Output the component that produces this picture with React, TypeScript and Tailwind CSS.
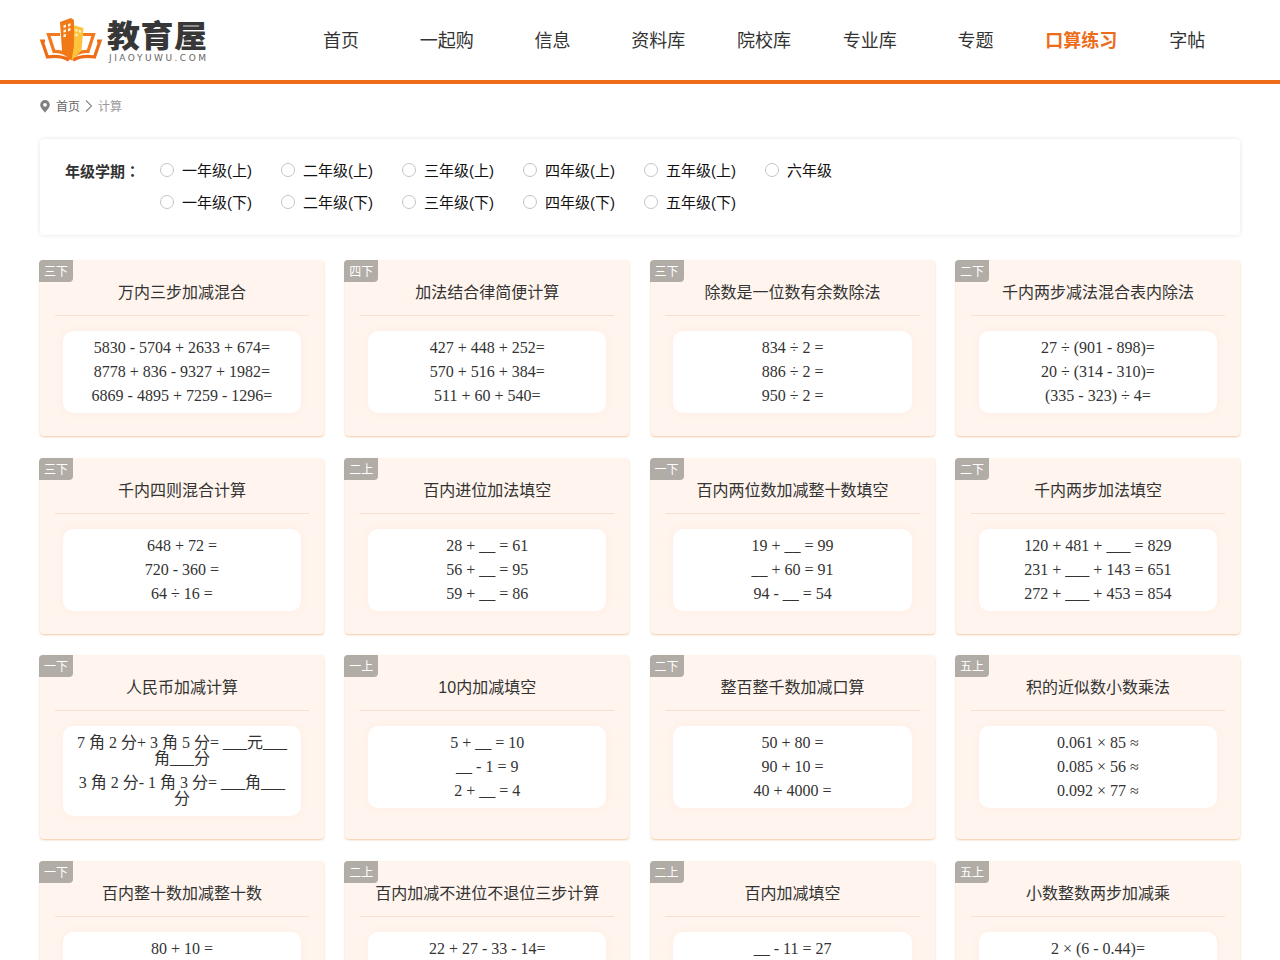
import clsx from 'clsx';
import { useState } from 'react';

interface Exercise {
    term: string;
    title: string;
    lines: string[];
}

const navItems = ['首页', '一起购', '信息', '资料库', '院校库', '专业库', '专题', '口算练习', '字帖'];

const grades = [
    ['一年级(上)', '二年级(上)', '三年级(上)', '四年级(上)', '五年级(上)', '六年级'],
    ['一年级(下)', '二年级(下)', '三年级(下)', '四年级(下)', '五年级(下)'],
];

const exercises: Exercise[] = [
    { term: '三下', title: '万内三步加减混合', lines: ['5830 - 5704 + 2633 + 674=', '8778 + 836 - 9327 + 1982=', '6869 - 4895 + 7259 - 1296='] },
    { term: '四下', title: '加法结合律简便计算', lines: ['427 + 448 + 252=', '570 + 516 + 384=', '511 + 60 + 540='] },
    { term: '三下', title: '除数是一位数有余数除法', lines: ['834 ÷ 2 =', '886 ÷ 2 =', '950 ÷ 2 ='] },
    { term: '二下', title: '千内两步减法混合表内除法', lines: ['27 ÷ (901 - 898)=', '20 ÷ (314 - 310)=', '(335 - 323) ÷ 4='] },
    { term: '三下', title: '千内四则混合计算', lines: ['648 + 72 =', '720 - 360 =', '64 ÷ 16 ='] },
    { term: '二上', title: '百内进位加法填空', lines: ['28 + __ = 61', '56 + __ = 95', '59 + __ = 86'] },
    { term: '一下', title: '百内两位数加减整十数填空', lines: ['19 + __ = 99', '__ + 60 = 91', '94 - __ = 54'] },
    { term: '二下', title: '千内两步加法填空', lines: ['120 + 481 + ___ = 829', '231 + ___ + 143 = 651', '272 + ___ + 453 = 854'] },
    { term: '一下', title: '人民币加减计算', lines: ['7 角 2 分+ 3 角 5 分= ___元___角___分', '3 角 2 分- 1 角 3 分= ___角___分'] },
    { term: '一上', title: '10内加减填空', lines: ['5 + __ = 10', '__ - 1 = 9', '2 + __ = 4'] },
    { term: '二下', title: '整百整千数加减口算', lines: ['50 + 80 =', '90 + 10 =', '40 + 4000 ='] },
    { term: '五上', title: '积的近似数小数乘法', lines: ['0.061 × 85 ≈', '0.085 × 56 ≈', '0.092 × 77 ≈'] },
    { term: '一下', title: '百内整十数加减整十数', lines: ['80 + 10 =', '60 - 20 =', '30 + 50 ='] },
    { term: '二上', title: '百内加减不进位不退位三步计算', lines: ['22 + 27 - 33 - 14=', '56 - 12 + 31 - 44=', '68 - 25 - 11 + 36='] },
    { term: '二上', title: '百内加减填空', lines: ['__ - 11 = 27', '35 + __ = 72', '__ + 18 = 64'] },
    { term: '五上', title: '小数整数两步加减乘', lines: ['2 × (6 - 0.44)=', '3 × (5 - 0.28)=', '4 × (1 + 0.75)='] },
];

const Logo = () => (
    <svg width="168" height="48" viewBox="0 0 168 48" className="shrink-0 overflow-visible">
        <g fill="none" strokeWidth="3.2">
            <path d="M20 18.500H8.500L14 35.500Q25 35 31 43" stroke="#f2791d" />
            <path d="M5 25H2L7.500 41Q20 39 29 44" stroke="#ee6c15" />
            <path d="M43 18.500H53.500L48 35.500Q37 35 31 43" stroke="#f2791d" />
            <path d="M57 25H60L54.500 41Q42 39 33 44" stroke="#ee6c15" />
        </g>
        <path d="M20 6 31 2 34 4V44L31.500 44.500 22 35Z" fill="#f17a16" />
        <path d="M34 9.300 43.500 12 41.500 34.500 31.500 44.500 34 30Z" fill="#fdc33c" />
        <path
            d="M23.500 9.200 26 8.500V11.200L23.500 12ZM28 7.900 30.500 7.200V9.900L28 10.700ZM23.500 13.900 26 13.200V15.900L23.500 16.700ZM28 12.600 30.500 11.900V14.600L28 15.400ZM23.500 18.600 26 17.900V20.600L23.500 21.400Z"
            fill="#fff2dd"
        />
        <path d="M35.500 13 37.500 13.500V15.800L35.500 15.400ZM39 13.900 41 14.400V16.700L39 16.300ZM35.500 17.500 37.500 17.900V20.300L35.500 19.900Z" fill="#fff2dd" />
        <text
            x="67"
            y="33.5"
            textLength="100"
            fontSize="33"
            fontWeight="900"
            fill="#373737"
            fontFamily="'Noto Sans CJK SC', sans-serif"
            transform="scale(1 .93)"
        >
            教育屋
        </text>
        <text x="69" y="45" textLength="97" fontSize="9" fill="#666" fontFamily="'DejaVu Sans', sans-serif">
            JIAOYUWU.COM
        </text>
    </svg>
);

const Header = () => (
    <header className="h-[84px] border-b-4 border-[#ec6c18] bg-white">
        <div className="mx-auto flex h-full w-[1200px] items-center">
            <Logo />
            <nav className="ml-20 flex flex-1 pt-px">
                {navItems.map((item) => (
                    <a
                        key={item}
                        href="#"
                        className={clsx('flex-1 text-center text-lg whitespace-nowrap', item === '口算练习' ? 'font-bold text-[#ec6c18]' : 'text-[#333]')}
                    >
                        {item}
                    </a>
                ))}
            </nav>
        </div>
    </header>
);

const Breadcrumb = () => (
    <div className="flex h-[55px] items-start pt-[15px] text-xs leading-4 text-[#666]">
        <svg width="10" height="13" viewBox="0 0 10 13" className="mt-px mr-1.5">
            <path
                d="M5 0a4.8 4.8 0 0 0-4.8 4.8C.2 8 3.5 10.500 5 12.700 6.500 10.500 9.800 8 9.800 4.800A4.800 4.800 0 0 0 5 0Zm0 2.900a1.900 1.900 0 1 1 0 3.800 1.900 1.900 0 0 1 0-3.800Z"
                fill="#808080"
                fillRule="evenodd"
            />
        </svg>
        <a href="#">首页</a>
        <svg width="8" height="12" viewBox="0 0 8 12" className="mx-[5px] mt-px" fill="none" stroke="#888" strokeWidth="1.1">
            <path d="M1 .5 6.500 6 1 11.500" />
        </svg>
        <span className="text-[#999]">计算</span>
    </div>
);

const GradeFilter = () => {
    const [selected, setSelected] = useState<string | null>(null);

    return (
        <section className="flex h-24 rounded bg-white px-[25px] pt-4 text-[15px] leading-8 shadow-[0_0_5px_rgba(0,0,0,0.1)]">
            <h2 className="w-[95px] font-bold text-[#333]">
                年级学期<span className="font-['Noto_Sans_CJK_TC',sans-serif]" lang="zh-TW">：</span>
            </h2>
            <div>
                {grades.map((row, i) => (
                    <div key={i} className="flex">
                        {row.map((grade) => (
                            <label key={grade} className="flex w-[121px] items-center text-[#111]">
                                <input
                                    type="radio"
                                    name="grade"
                                    checked={selected === grade}
                                    onChange={() => setSelected(grade)}
                                    className="mr-2 mb-0.5 size-3.5 appearance-none rounded-full border border-[#c4c4c4] bg-white checked:border-4 checked:border-[#ec6c18]"
                                />
                                {grade}
                            </label>
                        ))}
                    </div>
                ))}
            </div>
        </section>
    );
};

const ExerciseCard = ({ exercise }: { exercise: Exercise }) => (
    <article className="relative rounded bg-[#fff5ee] px-[14.8px] pb-[23px] shadow-[0_1px_2px_rgba(236,150,70,0.5)]">
        <span className="absolute top-0 -left-px h-[22px] w-[34px] rounded-tl rounded-br bg-[#b2aca6] text-center text-xs leading-6 text-white">
            {exercise.term}
        </span>
        <h3 className="h-14 border-b border-[#f8dfd0] pt-[21px] text-center text-base leading-6 text-[#333]">{exercise.title}</h3>
        <div className="mx-2 mt-[15px] rounded-[10px] bg-white px-3 py-[9px] text-center font-['Liberation_Serif','Noto_Sans_CJK_SC',serif] text-base leading-4 text-[#333] shadow-[0_0_10px_rgba(255,110,50,0.06)]">
            {exercise.lines.map((line) => (
                <p key={line} className="mb-2 last:mb-0">
                    {line}
                </p>
            ))}
        </div>
    </article>
);

const App = () => (
    <div className="h-screen overflow-hidden bg-white font-['Liberation_Sans','Noto_Sans_CJK_SC',sans-serif]">
        <Header />
        <main className="mx-auto w-[1200px]">
            <Breadcrumb />
            <GradeFilter />
            <div className="mt-[25px] mr-[0.1px] -ml-[0.1px] grid grid-cols-[repeat(4,284px)] justify-between gap-y-[21.5px]">
                {exercises.map((exercise) => (
                    <ExerciseCard key={exercise.title} exercise={exercise} />
                ))}
            </div>
        </main>
    </div>
);

export default App;
